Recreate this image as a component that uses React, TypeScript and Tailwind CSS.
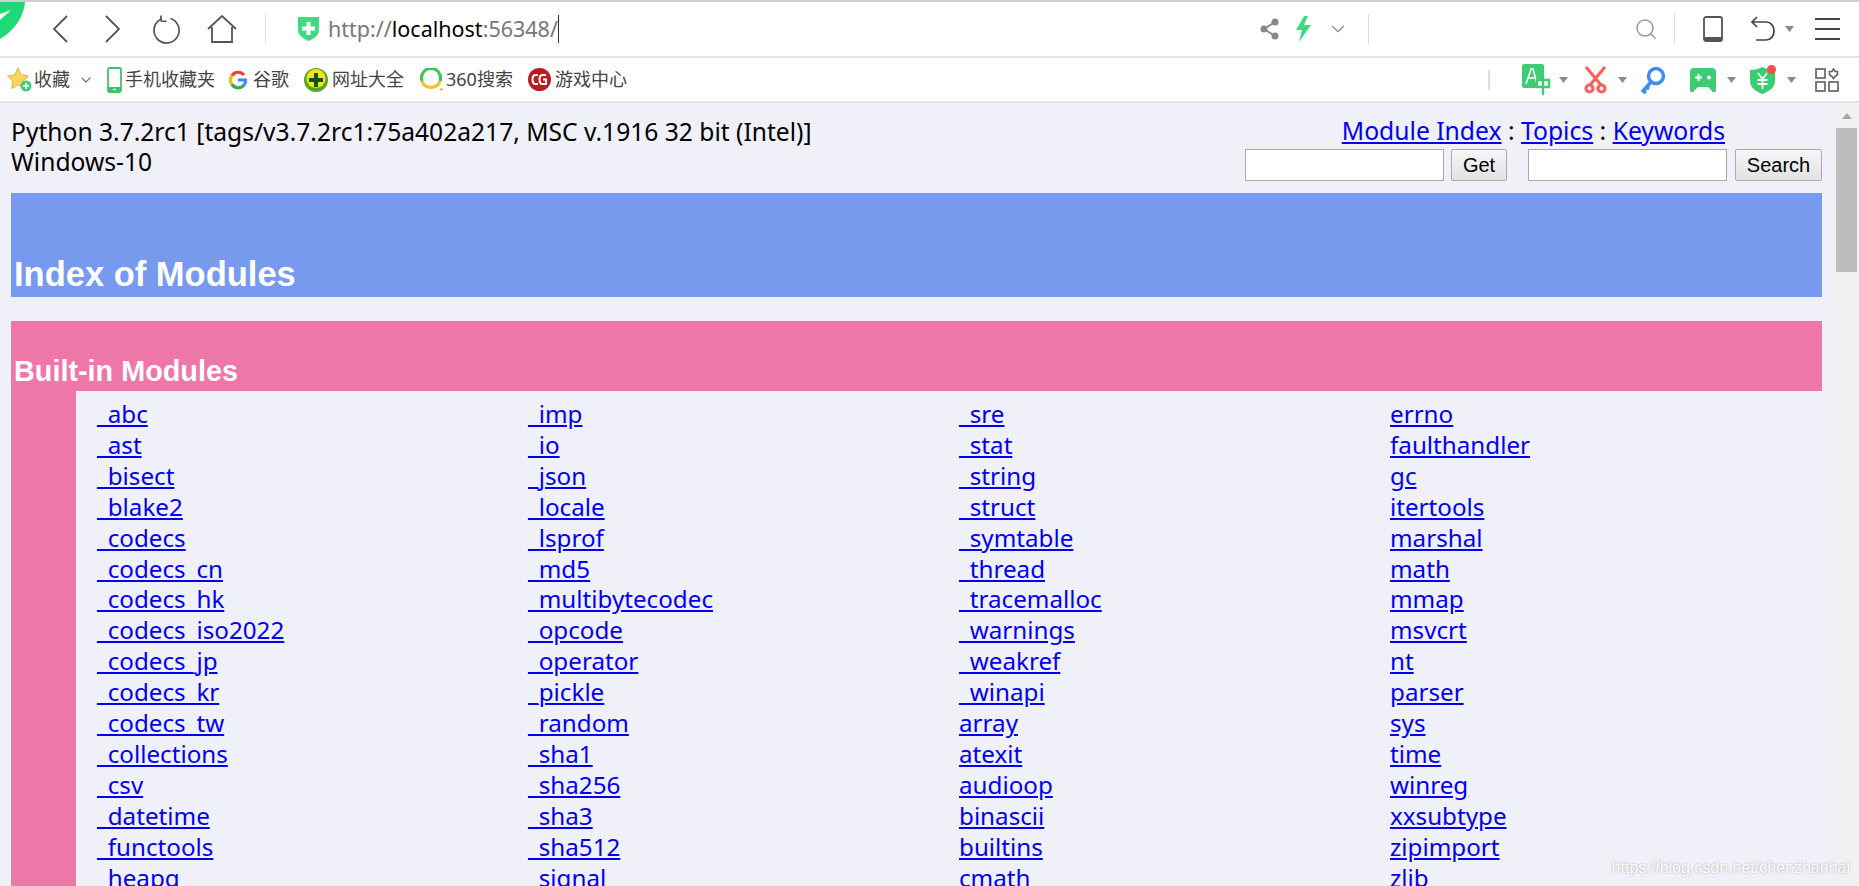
import { ChevronDown, Search } from 'lucide-react';

const columns = [
  ['_abc', '_ast', '_bisect', '_blake2', '_codecs', '_codecs_cn', '_codecs_hk', '_codecs_iso2022', '_codecs_jp', '_codecs_kr', '_codecs_tw', '_collections', '_csv', '_datetime', '_functools', '_heapq'],
  ['_imp', '_io', '_json', '_locale', '_lsprof', '_md5', '_multibytecodec', '_opcode', '_operator', '_pickle', '_random', '_sha1', '_sha256', '_sha3', '_sha512', '_signal'],
  ['_sre', '_stat', '_string', '_struct', '_symtable', '_thread', '_tracemalloc', '_warnings', '_weakref', '_winapi', 'array', 'atexit', 'audioop', 'binascii', 'builtins', 'cmath'],
  ['errno', 'faulthandler', 'gc', 'itertools', 'marshal', 'math', 'mmap', 'msvcrt', 'nt', 'parser', 'sys', 'time', 'winreg', 'xxsubtype', 'zipimport', 'zlib'],
];

const Tri = ({ className = '' }: { className?: string }) => (
  <svg width="9" height="6" viewBox="0 0 9 6" className={className}>
    <path d="M0 0h9L4.500 6z" fill="#8a8a8a" />
  </svg>
);

const Bookmark = ({ icon, label, className }: { icon: React.ReactNode; label: string; className: string }) => (
  <div className={`flex items-center ${className}`}>
    {icon}
    <span className="text-[18px] text-[#444] whitespace-nowrap">{label}</span>
  </div>
);

export default function App() {
  return (
    <div className="flex h-[886px] w-[1859px] flex-col overflow-hidden bg-white font-['Noto_Sans','Noto_Sans_CJK_SC',sans-serif]">
      {/* Browser toolbar */}
      <div className="relative flex h-[58px] shrink-0 items-center border-t-2 border-b-2 border-t-[#cfcfcf] border-b-[#e4e4e4]">
        <svg width="26" height="38" viewBox="0 0 26 38" className="absolute left-0 top-0">
          <path d="M0 0H25C24 14 15 28 0 37z" fill="#1fd977" />
          <path d="M0 18L11 8 0 12z" fill="#fff" />
        </svg>
        <svg width="16" height="28" viewBox="0 0 16 28" className="ml-[52px]" fill="none" stroke="#555" strokeWidth="1.800">
          <path d="M15 1L2 14 15 27" />
        </svg>
        <svg width="16" height="28" viewBox="0 0 16 28" className="ml-[37px]" fill="none" stroke="#555" strokeWidth="1.800">
          <path d="M1 1L14 14 1 27" />
        </svg>
        <svg width="29" height="29" viewBox="0 0 30 30" className="ml-[32px]" fill="none" stroke="#555" strokeWidth="1.800">
          <path d="M18 3.600A13 13 0 1 1 8.500 4.200" />
          <path d="M8 0.500L8.600 6.200 14 6.600" />
        </svg>
        <svg width="30" height="28" viewBox="0 0 30 28" className="ml-[25px]" fill="none" stroke="#555" strokeWidth="1.800">
          <path d="M1 14L15 1 29 14" />
          <path d="M5 12V27H25V12" />
        </svg>
        <div className="ml-[28px] h-[30px] w-px bg-[#ddd]" />
        <svg width="21" height="24" viewBox="0 0 21 24" className="ml-[32px]">
          <path d="M0 0H21V13C21 19 15 22 10.500 24 6 22 0 19 0 13z" fill="#3ddc84" />
          <path d="M8.500 5h4v4.500h4.500v4h-4.500v4.500h-4v-4.500h-4.500v-4h4.500z" fill="#fff" />
        </svg>
        <div className="ml-[9px] flex items-center text-[21.500px] text-[#777]">
          <span>http://</span>
          <span className="text-black">localhost</span>
          <span>:56348/</span>
          <span className="h-[28px] w-px bg-[#333]" />
        </div>
        <div className="ml-auto flex items-center pr-[19px]">
          <svg width="20" height="22" viewBox="0 0 20 22" fill="#888">
            <circle cx="15" cy="4" r="3.500" />
            <circle cx="4" cy="11" r="3.500" />
            <circle cx="15" cy="18" r="3.500" />
            <path d="M4 11L15 4M4 11L15 18" stroke="#888" strokeWidth="2" />
          </svg>
          <svg width="15" height="26" viewBox="0 0 15 26" className="ml-[16px]">
            <path d="M8 0L0 14H6L3 26 15 9H8L12 0z" fill="#3ddc84" />
          </svg>
          <ChevronDown className="ml-[16px] h-[22px] w-[22px] text-[#888]" strokeWidth={1.2} />
          <div className="ml-[19px] h-[30px] w-px bg-[#ddd]" />
          <Search className="ml-[265px] h-[24px] w-[24px] text-[#999]" strokeWidth={1.5} />
          <div className="ml-[16px] h-[30px] w-px bg-[#ddd]" />
          <svg width="20" height="26" viewBox="0 0 20 26" className="ml-[28px]" fill="none">
            <rect x="1" y="1" width="18" height="24" rx="2" stroke="#555" strokeWidth="1.800" />
            <path d="M1 21H19V23a2 2 0 0 1-2 2H3a2 2 0 0 1-2-2z" fill="#555" />
          </svg>
          <svg width="24" height="26" viewBox="0 0 24 26" className="ml-[28px]" fill="none" stroke="#444" strokeWidth="1.700">
            <path d="M6 1L1 6 6 11" />
            <path d="M1 6H15C20 6 23 10 23 15S20 24 15 24H5" />
          </svg>
          <Tri className="ml-[10px]" />
          <div className="ml-[21px] flex w-[25px] flex-col gap-[8px]">
            <div className="h-[2px] bg-[#444]" />
            <div className="h-[2px] bg-[#444]" />
            <div className="h-[2px] bg-[#444]" />
          </div>
        </div>
      </div>

      {/* Bookmarks bar */}
      <div className="flex h-[45px] shrink-0 items-center border-b-2 border-b-[#e4e4e4]">
        <Bookmark
          className="ml-[7px] gap-[2px]"
          label="收藏"
          icon={
            <svg width="25" height="25" viewBox="0 0 25 25">
              <path d="M11 1l3.200 7 7.300 1-5.300 5 1.300 7.500-6.500-3.600-6.500 3.600 1.300-7.500-5.300-5 7.300-1z" fill="#fbd55e" stroke="#e7b23a" />
              <circle cx="19" cy="19" r="5.500" fill="#45c97f" />
              <path d="M19 16v6M16 19h6" stroke="#fff" strokeWidth="1.600" />
            </svg>
          }
        />
        <ChevronDown className="ml-[8px] h-[16px] w-[16px] text-[#777]" strokeWidth={1.8} />
        <Bookmark
          className="ml-[13px] gap-[3px]"
          label="手机收藏夹"
          icon={
            <svg width="15" height="26" viewBox="0 0 15 26" fill="none">
              <rect x="1" y="1" width="13" height="24" rx="1.500" stroke="#3fc070" strokeWidth="1.800" />
              <path d="M1 20H14V25H1z" fill="#3fc070" />
              <path d="M6 22.500h3" stroke="#fff" strokeWidth="1.200" />
            </svg>
          }
        />
        <Bookmark
          className="ml-[14px] gap-[6px]"
          label="谷歌"
          icon={
            <svg width="18" height="20" viewBox="0 0 18 20" fill="none" strokeWidth="3.200">
              <path d="M15 5A7.500 7.500 0 0 0 3 5.500" stroke="#ea4335" />
              <path d="M3 5.500A7.500 7.500 0 0 0 3 14.500" stroke="#fbbc05" />
              <path d="M3 14.500A7.500 7.500 0 0 0 15 15" stroke="#34a853" />
              <path d="M15 15A7.500 7.500 0 0 0 16.500 10H9" stroke="#4285f4" />
            </svg>
          }
        />
        <Bookmark
          className="ml-[15px] gap-[4px]"
          label="网址大全"
          icon={
            <svg width="24" height="24" viewBox="0 0 24 24">
              <circle cx="12" cy="12" r="12" fill="#5aa51e" />
              <circle cx="12" cy="10.500" r="9.500" fill="#f2e51c" />
              <path d="M10 5h4v5h5v4h-5v5h-4v-5H5v-4h5z" fill="#14521c" />
            </svg>
          }
        />
        <Bookmark
          className="ml-[15px] gap-[3px]"
          label="360搜索"
          icon={
            <svg width="24" height="24" viewBox="0 0 24 24" fill="none" strokeWidth="3.200">
              <path d="M3 13A9.500 9.500 0 1 1 21 13" stroke="#3fc35f" />
              <path d="M3 13A9.500 9.500 0 0 0 21 13" stroke="#f5c12e" />
              <circle cx="22.500" cy="21.500" r="1.300" fill="#f5a02e" stroke="none" />
            </svg>
          }
        />
        <Bookmark
          className="ml-[15px] gap-[4px]"
          label="游戏中心"
          icon={
            <svg width="23" height="23" viewBox="0 0 23 23" fill="none">
              <circle cx="11.500" cy="11.500" r="11.500" fill="#b81c22" />
              <path d="M10 7H7.500C5.500 7 4.500 9 4.500 11.500S5.500 16 7.500 16H10" stroke="#fff" strokeWidth="2" />
              <path d="M18 7H14.500C12.500 7 11.500 9 11.500 11.500S12.500 16 14.500 16H18V11.500H15" stroke="#fff" strokeWidth="2" />
            </svg>
          }
        />
        <div className="ml-auto flex items-center pr-[20px]">
          <div className="h-[20px] w-[2px] bg-[#ddd]" />
          <svg width="29" height="31" viewBox="0 0 29 31" className="ml-[32px]">
            <rect x="0" y="0" width="22" height="24" rx="2" fill="#3dcb74" />
            <path d="M4 20L9 5h2l4 15M6 14h7" stroke="#fff" strokeWidth="1.600" fill="none" />
            <path d="M15 16h12v7H15zM21 13v18" stroke="#3dcb74" strokeWidth="2.400" fill="#fff" />
          </svg>
          <Tri className="ml-[8px]" />
          <svg width="23" height="28" viewBox="0 0 23 28" className="ml-[16px]" fill="none" stroke="#f4645f" strokeWidth="3.200">
            <path d="M2 1L17 19M21 1L6 19" />
            <circle cx="5.500" cy="22.500" r="3.500" />
            <circle cx="17.500" cy="22.500" r="3.500" />
          </svg>
          <Tri className="ml-[11px]" />
          <svg width="26" height="28" viewBox="0 0 26 28" className="ml-[13px]" fill="none" stroke="#3f8cf3" strokeWidth="3.400">
            <circle cx="16" cy="10" r="7.500" />
            <path d="M11 16L2 26M3 25l3 2M6 21l3 2" />
          </svg>
          <svg width="26" height="24" viewBox="0 0 26 24" className="ml-[24px]">
            <path d="M4 0H22A4 4 0 0 1 26 4V22A2 2 0 0 1 22 23L18 19H8L4 23A2 2 0 0 1 0 22V4A4 4 0 0 1 4 0z" fill="#3dcb74" />
            <path d="M5 9.500h7M8.500 6v7" stroke="#fff" strokeWidth="2" />
            <circle cx="19" cy="9.500" r="2" fill="#fff" />
          </svg>
          <Tri className="ml-[11px]" />
          <div className="relative ml-[14px] h-[28px] w-[25px]">
            <svg width="25" height="28" viewBox="0 0 25 28">
              <path d="M0 4C5 4 9 3 12.500 1 16 3 20 4 25 4V15C25 22 18 26 12.500 28 7 26 0 22 0 15z" fill="#3dcb74" />
              <path d="M8 7l4.500 6 4.500-6M7.500 14h10M7.500 18h10M12.500 13v10" stroke="#fff" strokeWidth="1.800" fill="none" />
            </svg>
            <div className="absolute -right-[1px] -top-[1px] h-[9px] w-[9px] rounded-full bg-[#f5514c]" />
          </div>
          <Tri className="ml-[12px]" />
          <svg width="24" height="24" viewBox="0 0 24 24" className="ml-[19px]" fill="none" stroke="#666" strokeWidth="1.700">
            <rect x="1" y="1" width="9" height="9" />
            <rect x="1" y="14" width="9" height="9" />
            <rect x="14" y="14" width="9" height="9" />
            <path d="M18.500 1l1.500 2.500h2.500v3L20 8.500l-1.500 2-1.500-2-2.500-2v-3H17z" />
          </svg>
        </div>
      </div>

      {/* Page */}
      <div className="relative flex min-h-0 flex-1 bg-[#f0f0f8]">
        <div className="min-w-0 flex-1 pl-[11px] pr-[14px]">
          <div className="flex h-[90px] justify-between pt-[11px]">
            <div className="pt-[3px] text-[24.600px] leading-[30px] text-black">
              Python 3.7.2rc1 [tags/v3.7.2rc1:75a402a217, MSC v.1916 32 bit (Intel)]
              <br />
              Windows-10
            </div>
            <div className="flex flex-col items-end">
              <div className="mr-[97px] text-[24.700px] leading-[33px] text-black">
                <a className="text-[#0000ee] underline">Module Index</a> : <a className="text-[#0000ee] underline">Topics</a> : <a className="text-[#0000ee] underline">Keywords</a>
              </div>
              <div className="mt-[2px] flex items-center font-['Liberation_Sans',sans-serif] text-[20px]">
                <div className="h-[32px] w-[199px] border border-[#aaa] bg-white" />
                <div className="ml-[7px] flex h-[32px] w-[56px] items-center justify-center rounded-[2px] border border-[#aaa] bg-gradient-to-b from-[#f6f6f6] to-[#e2e2e2]">Get</div>
                <div className="ml-[21px] h-[32px] w-[199px] border border-[#aaa] bg-white" />
                <div className="ml-[8px] flex h-[32px] w-[87px] items-center justify-center rounded-[2px] border border-[#aaa] bg-gradient-to-b from-[#f6f6f6] to-[#e2e2e2]">Search</div>
              </div>
            </div>
          </div>

          <div className="flex h-[104px] items-end bg-[#7799ee] pb-[3px] pl-[3px] font-['Liberation_Sans',sans-serif] text-[34.500px] font-bold leading-[40px] text-white">
            Index of Modules
          </div>

          <div className="mt-6 flex h-[70px] items-end bg-[#ee77aa] pb-[3px] pl-[3px] font-['Liberation_Sans',sans-serif] text-[28.800px] font-bold leading-[34px] text-white">
            Built-in Modules
          </div>

          <div className="flex bg-[#ee77aa] pl-[65px]">
            <div className="grid flex-1 grid-cols-[431px_431px_431px_1fr] bg-[#f0f0f8] pl-[21px] pt-[8px]">
              {columns.map((col) => (
                <div key={col[0]} className="text-[24.200px] leading-[30.900px]">
                  {col.map((m) => (
                    <div key={m}>
                      <a className="text-[#0000ee] underline">{m}</a>
                    </div>
                  ))}
                </div>
              ))}
            </div>
          </div>
        </div>

        {/* Scrollbar */}
        <div className="flex w-[23px] shrink-0 flex-col bg-[#f1f1f1] pr-[2px]">
          <div className="flex h-[25px] items-center justify-center">
            <svg width="10" height="6" viewBox="0 0 10 6">
              <path d="M0 6L5 0l5 6z" fill="#a6a6a6" />
            </svg>
          </div>
          <div className="h-[144px] bg-[#bdbdbd]" />
        </div>

        <span className="absolute bottom-[6px] right-[9px] font-['Liberation_Sans',sans-serif] text-[16px] text-white [text-shadow:0_0_2px_#999]">
          https://blog.csdn.net/chenzhanhai
        </span>
      </div>
    </div>
  );
}
